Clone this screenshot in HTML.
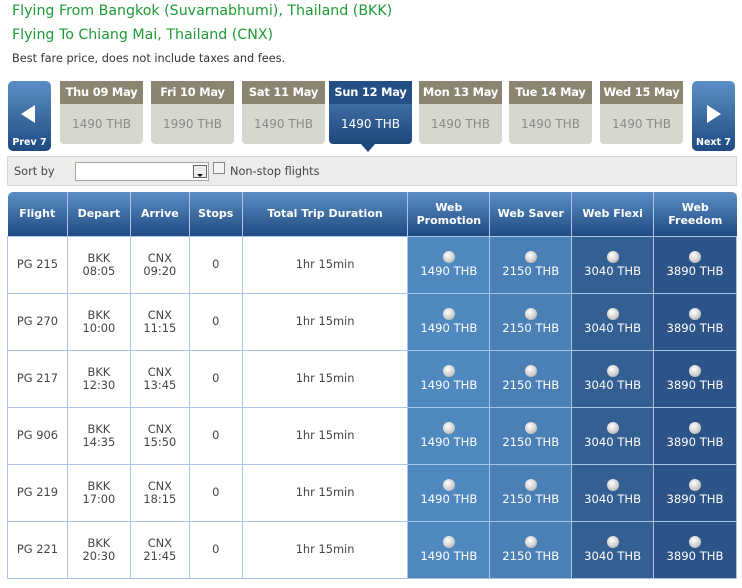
<!DOCTYPE html>
<html><head><meta charset="utf-8"><style>
*{margin:0;padding:0;box-sizing:border-box}
body{width:742px;height:588px;background:#fff;font-family:"DejaVu Sans","Liberation Sans",sans-serif;position:relative;overflow:hidden}
.g{position:absolute;left:12px;color:#1e9b35;font-size:14.2px;white-space:nowrap}
.s{position:absolute;left:12px;top:52px;font-size:11.3px;color:#333;white-space:nowrap}
.nav{position:absolute;top:81px;width:43px;height:70px;border-radius:5px;background:linear-gradient(#5b8fc4,#1f4a82);color:#fff;font-size:9.5px;font-weight:bold;text-align:center}
.nav .t{position:absolute;bottom:3px;left:0;right:0}
.tab{position:absolute;top:81px;width:83px;height:63px}
.tab .h{height:23px;background:#8a8470;color:#fff;font-weight:bold;font-size:11.4px;text-align:center;line-height:22px;white-space:nowrap;letter-spacing:-0.2px}
.tab .b{height:40px;background:#d8d7cf;color:#8a8a88;font-size:12px;text-align:center;line-height:40px;border-radius:0 0 4px 4px}
.tab.sel .h{background:#244f85}
.tab.sel .b{background:linear-gradient(#3e6ea3,#1e4679);color:#fff}
.sort{position:absolute;left:7px;top:156px;width:730px;height:30px;background:#ececec;border:1px solid #d8d8d8}
table{position:absolute;left:7px;top:192px;border-collapse:collapse;width:730px}
th{background:linear-gradient(#5b8fc4,#1f4a82);color:#fff;font-size:11px;font-weight:bold;height:44px;border-left:1px solid #a8c4e8;line-height:13px}
th:first-child{border-left:none;border-top-left-radius:5px}
th:last-child{border-top-right-radius:5px}
td{height:57px;border:1px solid #a8c4e8;text-align:center;font-size:11.4px;color:#444;line-height:13px}
td.p{color:#fff;font-size:11.6px}
td.c1{background:#5089bf}td.c2{background:#4a80b6}td.c3{background:#335f92}td.c4{background:#2c5489}
.r{display:block;margin:0 auto 2px;width:12px;height:12px;border-radius:50%;background:radial-gradient(circle at 40% 35%,#fff,#ccc 60%,#999);}
</style></head><body>
<div class="g" style="top:3px">Flying From Bangkok (Suvarnabhumi), Thailand (BKK)</div>
<div class="g" style="top:27px">Flying To Chiang Mai, Thailand (CNX)</div>
<div class="s">Best fare price, does not include taxes and fees.</div>

<div class="nav" style="left:8px"><svg width="16" height="20" style="position:absolute;left:13px;top:24px"><polygon points="14,0 14,18 0,9" fill="#fff"/></svg><div class="t">Prev 7</div></div>
<div class="tab" style="left:60px"><div class="h">Thu 09 May</div><div class="b">1490 THB</div></div>
<div class="tab" style="left:151px"><div class="h">Fri 10 May</div><div class="b">1990 THB</div></div>
<div class="tab" style="left:242px"><div class="h">Sat 11 May</div><div class="b">1490 THB</div></div>
<div class="tab sel" style="left:329px"><div class="h">Sun 12 May</div><div class="b">1490 THB</div></div>
<svg style="position:absolute;left:361px;top:144px" width="14" height="9"><polygon points="0,0 14,0 7,8" fill="#1e4679"/></svg>
<div class="tab" style="left:419px"><div class="h">Mon 13 May</div><div class="b">1490 THB</div></div>
<div class="tab" style="left:509px"><div class="h">Tue 14 May</div><div class="b">1490 THB</div></div>
<div class="tab" style="left:600px"><div class="h">Wed 15 May</div><div class="b">1490 THB</div></div>
<div class="nav" style="left:692px"><svg width="16" height="20" style="position:absolute;left:15px;top:24px"><polygon points="0,0 0,18 14,9" fill="#fff"/></svg><div class="t">Next 7</div></div>

<div class="sort">
<span style="position:absolute;left:6px;top:8px;font-size:11.3px;color:#444">Sort by</span>
<div style="position:absolute;left:67px;top:5px;width:134px;height:19px;background:#fff;border:1px solid #aaa69a"><div style="position:absolute;right:1px;top:2px;width:14px;height:13px;border:1px solid #666;background:#eee"><svg width="12" height="11"><polygon points="3,4 9,4 6,7" fill="#000"/></svg></div></div>
<div style="position:absolute;left:205px;top:5px;width:12px;height:12px;border:1px solid #888;background:#f4f4f4"></div>
<span style="position:absolute;left:222px;top:8px;font-size:11.3px;color:#444">Non-stop flights</span>
</div>

<table>
<tr><th style="width:60px">Flight</th><th style="width:63px">Depart</th><th style="width:59px">Arrive</th><th style="width:53px">Stops</th><th style="width:166px">Total Trip Duration</th><th style="width:82px">Web<br>Promotion</th><th style="width:82px">Web Saver</th><th style="width:82px">Web Flexi</th><th style="width:83px">Web<br>Freedom</th></tr>
<tr><td>PG 215</td><td>BKK<br>08:05</td><td>CNX<br>09:20</td><td>0</td><td>1hr 15min</td><td class="p c1"><i class="r"></i>1490 THB</td><td class="p c2"><i class="r"></i>2150 THB</td><td class="p c3"><i class="r"></i>3040 THB</td><td class="p c4"><i class="r"></i>3890 THB</td></tr>
<tr><td>PG 270</td><td>BKK<br>10:00</td><td>CNX<br>11:15</td><td>0</td><td>1hr 15min</td><td class="p c1"><i class="r"></i>1490 THB</td><td class="p c2"><i class="r"></i>2150 THB</td><td class="p c3"><i class="r"></i>3040 THB</td><td class="p c4"><i class="r"></i>3890 THB</td></tr>
<tr><td>PG 217</td><td>BKK<br>12:30</td><td>CNX<br>13:45</td><td>0</td><td>1hr 15min</td><td class="p c1"><i class="r"></i>1490 THB</td><td class="p c2"><i class="r"></i>2150 THB</td><td class="p c3"><i class="r"></i>3040 THB</td><td class="p c4"><i class="r"></i>3890 THB</td></tr>
<tr><td>PG 906</td><td>BKK<br>14:35</td><td>CNX<br>15:50</td><td>0</td><td>1hr 15min</td><td class="p c1"><i class="r"></i>1490 THB</td><td class="p c2"><i class="r"></i>2150 THB</td><td class="p c3"><i class="r"></i>3040 THB</td><td class="p c4"><i class="r"></i>3890 THB</td></tr>
<tr><td>PG 219</td><td>BKK<br>17:00</td><td>CNX<br>18:15</td><td>0</td><td>1hr 15min</td><td class="p c1"><i class="r"></i>1490 THB</td><td class="p c2"><i class="r"></i>2150 THB</td><td class="p c3"><i class="r"></i>3040 THB</td><td class="p c4"><i class="r"></i>3890 THB</td></tr>
<tr><td>PG 221</td><td>BKK<br>20:30</td><td>CNX<br>21:45</td><td>0</td><td>1hr 15min</td><td class="p c1"><i class="r"></i>1490 THB</td><td class="p c2"><i class="r"></i>2150 THB</td><td class="p c3"><i class="r"></i>3040 THB</td><td class="p c4"><i class="r"></i>3890 THB</td></tr>
</table>
</body></html>
